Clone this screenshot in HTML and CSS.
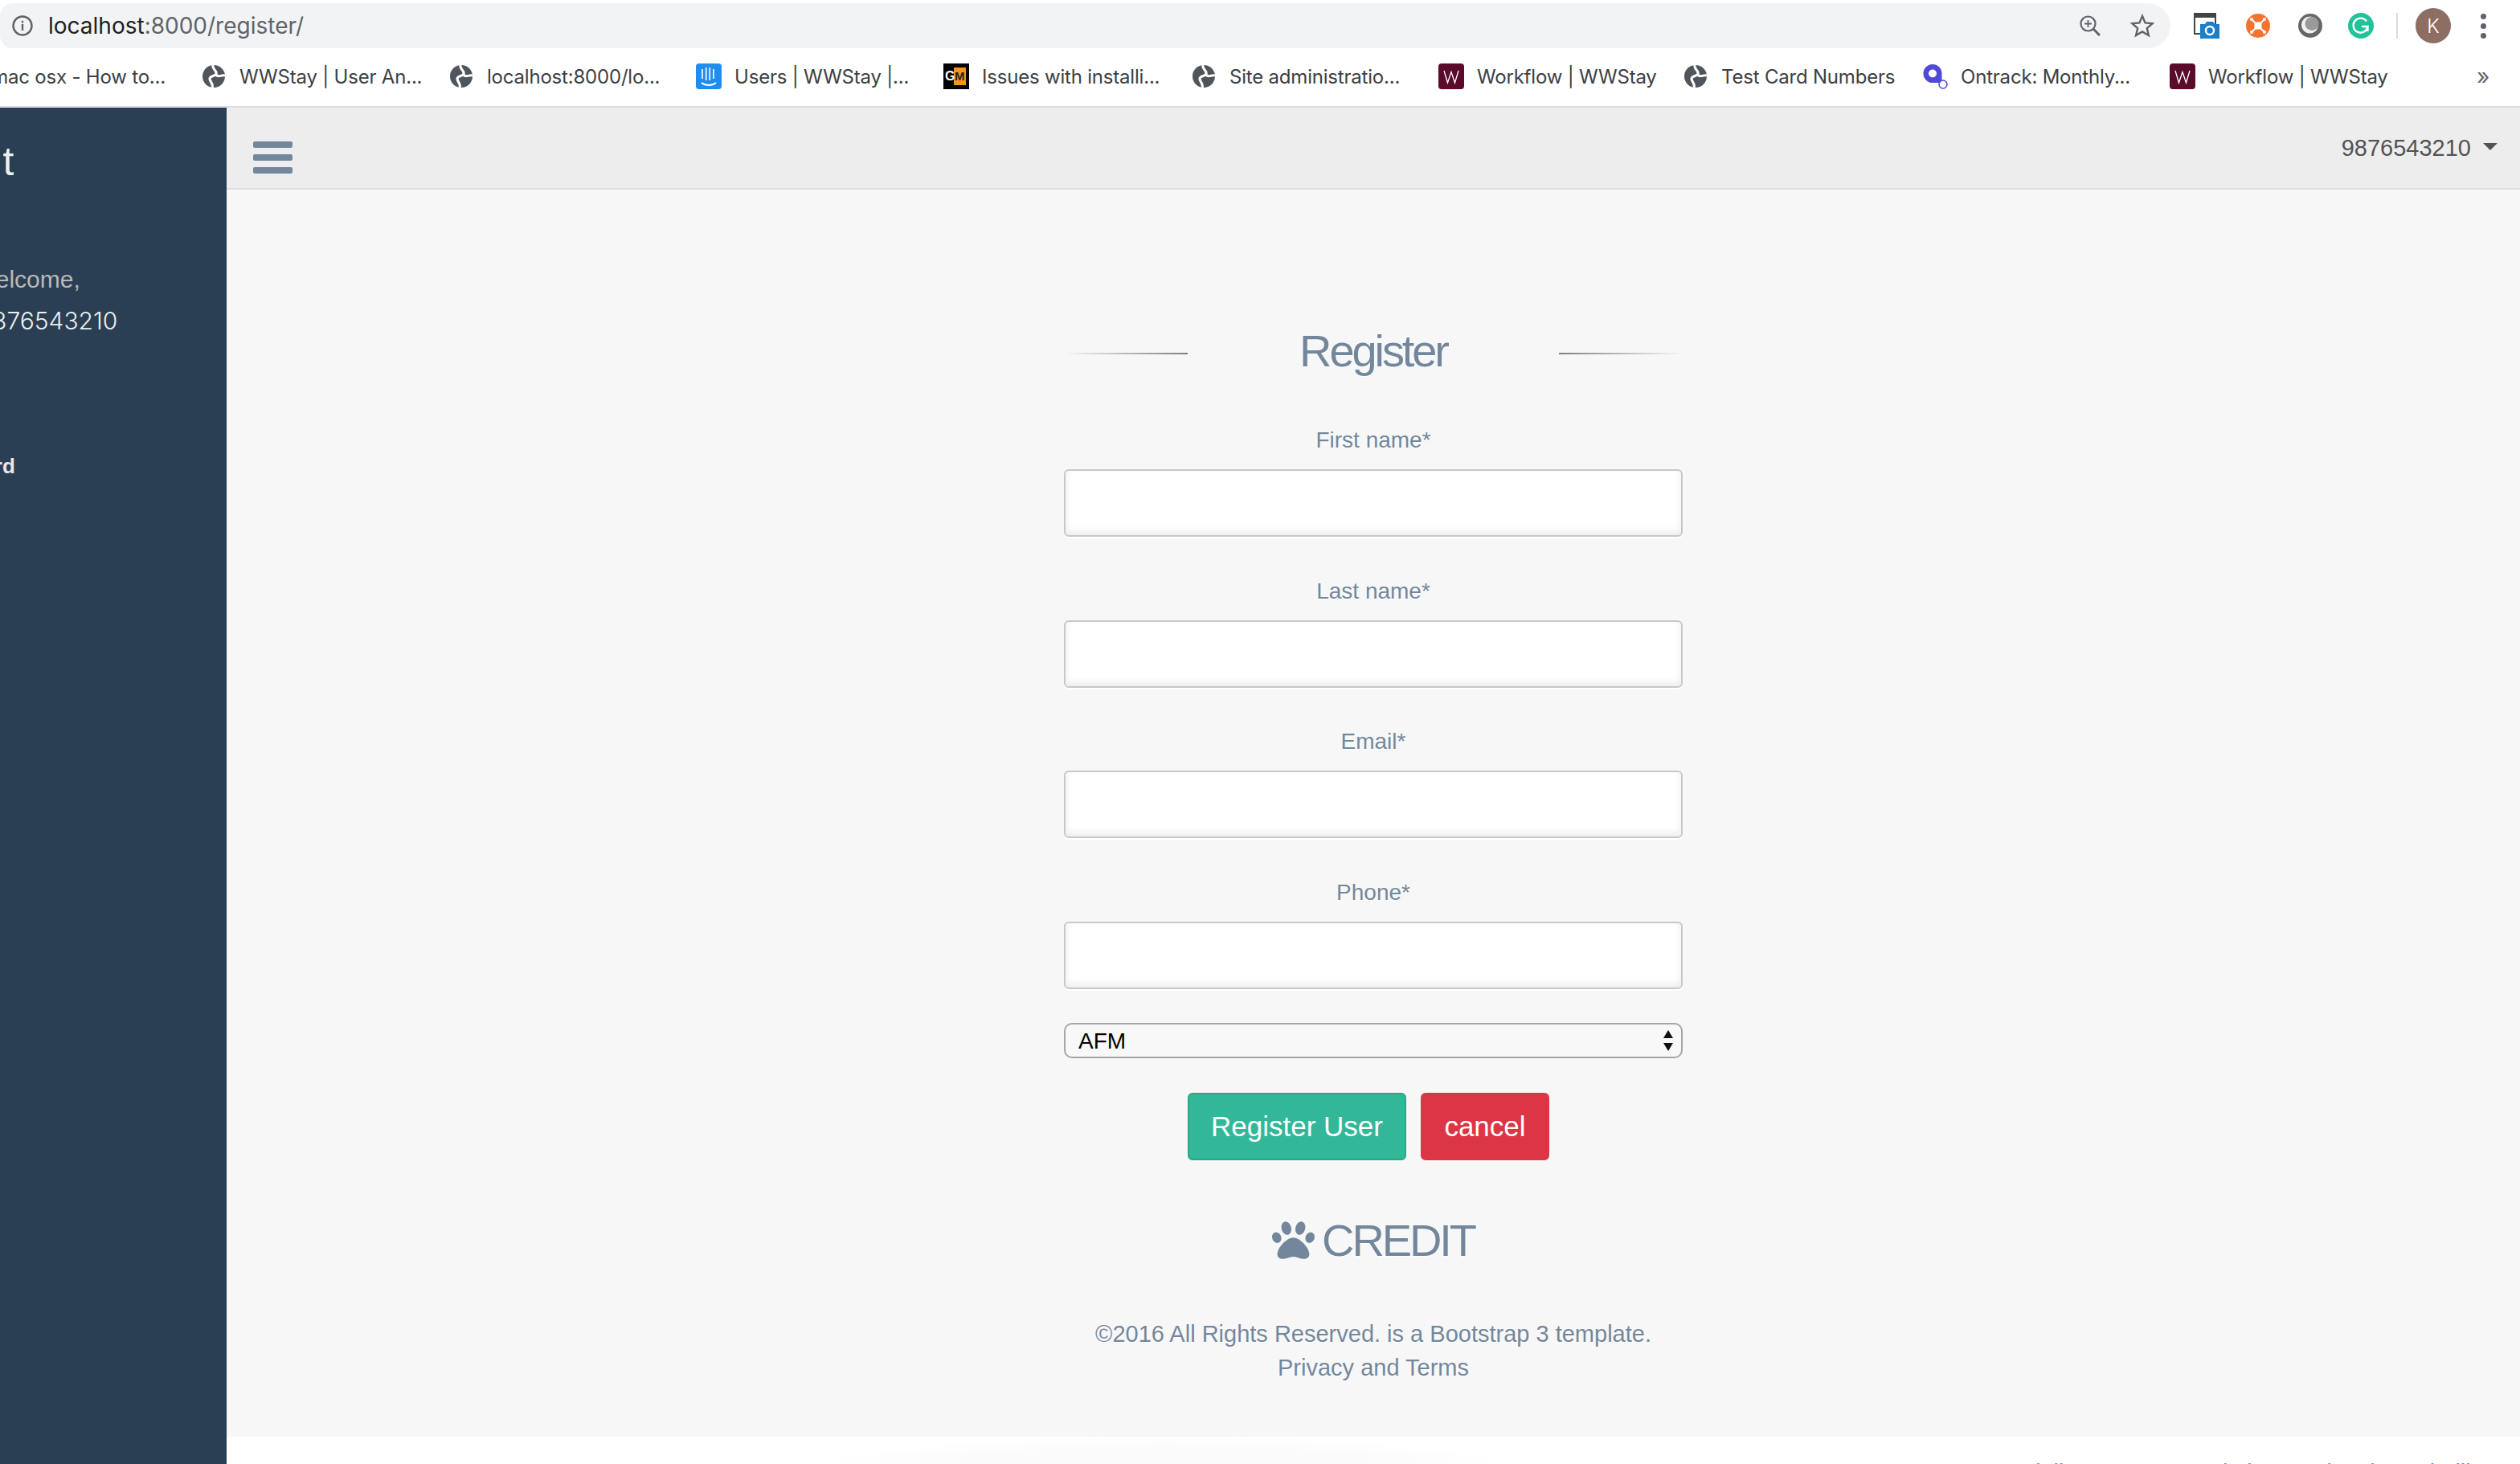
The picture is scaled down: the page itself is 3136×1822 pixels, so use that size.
FILE: index.html
```html
<!DOCTYPE html>
<html lang="en">
<head>
    <meta charset="UTF-8">
    <title>Register</title>
    <link rel="stylesheet" href="styles.css">
</head>
<body>
    <svg class="defs">
        <symbol id="globe" viewBox="0 0 28 28">
            <circle cx="14" cy="14" r="14" fill="#50555b"/>
            <path d="M13 0C12 6 18 6 17 11 16 14 9 13 9 17 9 21 14 23 12 28" fill="none" stroke="#fff" stroke-width="3.200"/>
            <path d="M17 12C19 16 23 12 28 13" fill="none" stroke="#fff" stroke-width="3"/>
        </symbol>
        <symbol id="wf" viewBox="0 0 32 32">
            <rect width="32" height="32" rx="4" fill="#5a0b2b"/>
            <path d="M7 9l4.500 15L16 10.500 20.500 24 25 9" fill="none" stroke="#fff" stroke-width="1.300"/>
        </symbol>
    </svg>

    <div class="toolbar">
        <div class="omnibox">
            <svg class="info" viewBox="0 0 26 26" width="26" height="26"><circle cx="13" cy="13" r="11.500" fill="none" stroke="#5f6368" stroke-width="2.400"/><rect x="11.800" y="11" width="2.400" height="8" fill="#5f6368"/><rect x="11.800" y="6.800" width="2.400" height="2.600" fill="#5f6368"/></svg>
            <span class="url"><span class="host">localhost</span>:8000/register/</span>
            <svg class="zoom-ic" viewBox="0 0 26 26" width="26" height="26"><circle cx="10.500" cy="10.500" r="9" fill="none" stroke="#5f6368" stroke-width="2.200"/><path d="M17 17l8 8" stroke="#5f6368" stroke-width="3"/><path d="M10.500 6v9M6 10.500h9" stroke="#5f6368" stroke-width="1.800"/></svg>
            <svg class="star" viewBox="0 0 30 30" width="30" height="30"><path d="M15 3l3.600 8.400 9.100.800-6.900 6 2.100 8.900L15 22.400l-7.900 4.700 2.100-8.900-6.900-6 9.100-.800z" fill="none" stroke="#5f6368" stroke-width="2.400"/></svg>
        </div>
        <div class="extensions">
            <svg viewBox="0 0 32 32" width="32" height="32"><rect x="1" y="1" width="26" height="25" fill="#fff" stroke="#444" stroke-width="2"/><rect x="1" y="1" width="26" height="5" fill="#444"/><path d="M8 14h6l2-3h8l2 3h6v18H8z" fill="#1a7ec8"/><circle cx="20" cy="22" r="5" fill="none" stroke="#fff" stroke-width="2.400"/></svg>
            <svg viewBox="0 0 30 30" width="30" height="30"><circle cx="15" cy="15" r="15" fill="#f4742f"/><rect x="10.500" y="10.500" width="9" height="9" rx="2" fill="#fff"/><path d="M7 7l16 16M23 7L7 23" stroke="#fff" stroke-width="2"/><circle cx="7" cy="7" r="2" fill="#fff"/><circle cx="23" cy="7" r="2" fill="#fff"/><circle cx="7" cy="23" r="2" fill="#fff"/><circle cx="23" cy="23" r="2" fill="#fff"/></svg>
            <svg viewBox="0 0 30 30" width="30" height="30"><circle cx="15" cy="15" r="15" fill="#666"/><circle cx="14.500" cy="14" r="10.500" fill="#f2f2f2"/><circle cx="17" cy="12.500" r="8.500" fill="#9a9a9a"/></svg>
            <svg viewBox="0 0 32 32" width="32" height="32"><circle cx="16" cy="16" r="16" fill="#23c29a"/><path d="M23 10.500A9 9 0 1 0 24.500 17H17M24.500 17v6" fill="none" stroke="#fff" stroke-width="2.400"/></svg>
            <span class="divider"></span>
            <span class="avatar">K</span>
            <span class="kebab"><i></i><i></i><i></i></span>
        </div>
    </div>

    <div class="bookmarks">
        <div class="bm first"><span>mac osx - How to...</span></div>
        <div class="bm"><svg width="28" height="28"><use href="#globe"/></svg><span>WWStay | User An...</span></div>
        <div class="bm"><svg width="28" height="28"><use href="#globe"/></svg><span>localhost:8000/lo...</span></div>
        <div class="bm"><svg width="32" height="32" viewBox="0 0 32 32"><rect width="32" height="32" rx="4" fill="#1f8ded"/><path d="M8 7v12M12.700 5v16M17.300 5v16M22 7v12" stroke="#fff" stroke-width="1.600"/><path d="M7 24c5 4 13 4 18 0" fill="none" stroke="#fff" stroke-width="1.800"/></svg><span>Users | WWStay |...</span></div>
        <div class="bm"><svg width="32" height="32" viewBox="0 0 32 32"><rect width="32" height="32" fill="#000"/><rect x="13" y="5" width="15" height="22" fill="#f7941d"/><text class="gm" x="2" y="21">G</text><text class="gm dark" x="14" y="21">M</text></svg><span>Issues with installi...</span></div>
        <div class="bm"><svg width="28" height="28"><use href="#globe"/></svg><span>Site administratio...</span></div>
        <div class="bm"><svg width="32" height="32"><use href="#wf"/></svg><span>Workflow | WWStay</span></div>
        <div class="bm"><svg width="28" height="28"><use href="#globe"/></svg><span>Test Card Numbers</span></div>
        <div class="bm"><svg width="32" height="32" viewBox="0 0 32 32"><path d="M13 1a11.500 11.500 0 0 1 11.500 11.500V24H13a11.500 11.500 0 0 1 0-23z" fill="#4f48d8"/><circle cx="13" cy="12.500" r="5" fill="#fff"/><circle cx="26" cy="26" r="5" fill="#fff" stroke="#4f48d8" stroke-width="1.500"/></svg><span>Ontrack: Monthly...</span></div>
        <div class="bm"><svg width="32" height="32"><use href="#wf"/></svg><span>Workflow | WWStay</span></div>
        <div class="bm-more">»</div>
    </div>

    <div class="app">
        <div class="sidebar">
            <div class="side-title">Credit</div>
            <div class="side-welcome">Welcome,</div>
            <div class="side-user">9876543210</div>
            <div class="side-link">Dashboard</div>
        </div>

        <div class="main">
            <div class="topnav">
                <div class="hamburger"><i></i><i></i><i></i></div>
                <div class="user-menu">9876543210<span class="caret"></span></div>
            </div>

            <div class="content">
                <form class="register">
                    <h1 class="reg-title"><span>Register</span></h1>

                    <label class="field-label" for="first">First name*</label>
                    <input class="field" type="text" id="first">

                    <label class="field-label" for="last">Last name*</label>
                    <input class="field" type="text" id="last">

                    <label class="field-label" for="email">Email*</label>
                    <input class="field" type="text" id="email">

                    <label class="field-label" for="phone">Phone*</label>
                    <input class="field" type="text" id="phone">

                    <div class="select-wrap">
                        <select class="currency">
                            <option>AFM</option>
                        </select>
                        <svg class="select-arrows" viewBox="0 0 12 26" width="12" height="26"><path d="M6 0l6 10H0zM6 26L0 16h12z" fill="#111"/></svg>
                    </div>

                    <div class="buttons">
                        <button type="button" class="btn btn-success">Register User</button>
                        <button type="button" class="btn btn-danger">cancel</button>
                    </div>

                    <div class="brand">
                        <svg viewBox="0 0 512 512" width="53" height="53"><path fill="#73879c" d="M256 224c-79.410 0-192 122.760-192 200.250 0 34.900 26.810 55.750 71.740 55.750 48.840 0 81.090-25.080 120.260-25.080 39.510 0 71.850 25.080 120.260 25.080 44.930 0 71.740-20.850 71.740-55.750C448 346.760 335.410 224 256 224zm-147.280-12.610c-10.400-34.650-42.440-57.090-71.560-50.130-29.120 6.960-44.290 40.690-33.890 75.340 10.400 34.650 42.440 57.090 71.560 50.130 29.120-6.960 44.290-40.690 33.890-75.340zm84.720-20.780c30.940-8.140 46.420-49.940 34.580-93.360s-46.520-72.010-77.460-63.870-46.420 49.940-34.580 93.360c11.840 43.420 46.520 72.010 77.460 63.870zm281.390-29.340c-29.120-6.960-61.150 15.480-71.560 50.130-10.400 34.650 4.770 68.380 33.890 75.340 29.120 6.960 61.150-15.480 71.560-50.130 10.400-34.650-4.770-68.380-33.890-75.340zm-156.270 29.340c30.940 8.140 65.620-20.450 77.460-63.870 11.840-43.420-3.640-85.210-34.580-93.360s-65.620 20.450-77.460 63.870c-11.840 43.420 3.640 85.220 34.580 93.360z"/></svg>
                        <span>CREDIT</span>
                    </div>

                    <p class="copy">©2016 All Rights Reserved. is a Bootstrap 3 template.<br>Privacy and Terms</p>
                </form>

                <div class="footer">Gentelella - Bootstrap Admin Template by Colorlib</div>
            </div>
        </div>
    </div>
</body>
</html>
```

FILE: styles.css
```css
html, body {
    height: 100%;
    margin: 0;
    overflow: hidden;
}

body {
    display: flex;
    flex-direction: column;
    background-color: #fff;
    font-family: "Liberation Sans", Arial, sans-serif;
    color: #73879c;
}

.defs {
    display: none;
}

/* browser chrome */
.toolbar {
    display: flex;
    align-items: flex-start;
    height: 60px;
    flex: none;
}

.omnibox {
    display: flex;
    align-items: center;
    width: 2701px;
    height: 56px;
    margin-top: 4px;
    padding-left: 15px;
    box-sizing: border-box;
    background-color: #f1f3f4;
    border-radius: 16px 28px 28px 16px;
}

.url {
    margin-left: 19px;
    font-family: Inter, sans-serif;
    font-size: 28px;
    color: #5f6368;
    flex: 1;
}

.host {
    color: #202124;
}

.zoom-ic {
    margin-right: 37px;
}

.star {
    margin-right: 20px;
}

.extensions {
    display: flex;
    align-items: center;
    flex: 1;
    height: 64px;
    padding-left: 29px;
}

.extensions svg:nth-child(1) {
    margin-right: 33px;
}

.extensions svg:nth-child(2) {
    margin-right: 35px;
}

.extensions svg:nth-child(3) {
    margin-right: 32px;
}

.divider {
    width: 2px;
    height: 32px;
    margin-left: 28px;
    margin-right: 22px;
    background-color: #dadce0;
}

.avatar {
    display: flex;
    align-items: center;
    justify-content: center;
    width: 44px;
    height: 44px;
    border-radius: 50%;
    background-color: #8d6e63;
    color: #fff;
    font-family: Inter, sans-serif;
    font-size: 24px;
    font-weight: 300;
}

.kebab {
    display: flex;
    flex-direction: column;
    gap: 5px;
    margin-left: 37px;
}

.kebab i {
    display: block;
    width: 7px;
    height: 7px;
    border-radius: 50%;
    background-color: #5f6368;
}

.bookmarks {
    display: grid;
    grid-template-columns: 252px 308px 306px 308px 310px 306px 306px 296px 308px 382px 1fr;
    align-items: center;
    height: 70px;
    padding-bottom: 2px;
    flex: none;
    border-bottom: 2px solid #dcdde1;
    font-family: Inter, sans-serif;
    font-size: 24px;
    letter-spacing: -0.2px;
    color: #3c4043;
    overflow: hidden;
}

.bm {
    display: flex;
    align-items: center;
    gap: 18px;
    white-space: nowrap;
}

.bm svg[width="32"] {
    margin-right: -2px;
}

.bm.first {
    justify-content: flex-end;
    padding-right: 46px;
}

.gm {
    font-family: "Liberation Sans", sans-serif;
    font-size: 16px;
    font-weight: bold;
    fill: #fff;
}

.gm.dark {
    fill: #222;
    font-size: 15px;
}

.bm-more {
    font-size: 28px;
    color: #5f6368;
}

/* app */
.app {
    display: flex;
    flex: 1;
    min-height: 0;
}

.sidebar {
    width: 282px;
    flex: none;
    background-color: #2a3f54;
    overflow: hidden;
    white-space: nowrap;
}

.side-title {
    margin-top: 42px;
    margin-left: -116px;
    font-size: 50px;
    line-height: 50px;
    color: #ecf0f1;
}

.side-welcome {
    margin-top: 102px;
    margin-left: -33px;
    font-size: 30px;
    line-height: 40px;
    color: #bab8b8;
}

.side-user {
    margin-top: 11px;
    margin-left: -28px;
    font-family: Inter, sans-serif;
    font-weight: 300;
    font-size: 30px;
    line-height: 40px;
    color: #ecf0f1;
}

.side-link {
    margin-top: 141px;
    margin-left: -117px;
    font-size: 26px;
    font-weight: bold;
    line-height: 40px;
    color: #e7e7e7;
}

.main {
    display: flex;
    flex-direction: column;
    flex: 1;
    min-width: 0;
}

.topnav {
    display: flex;
    align-items: center;
    justify-content: space-between;
    height: 100px;
    flex: none;
    padding-left: 33px;
    padding-right: 28px;
    background-color: #ededed;
    border-bottom: 2px solid #d9dee4;
}

.hamburger {
    display: flex;
    flex-direction: column;
    gap: 8px;
    margin-top: 23px;
}

.hamburger i {
    display: block;
    width: 49px;
    height: 8px;
    border-radius: 2px;
    background-color: #73879c;
}

.user-menu {
    display: flex;
    align-items: center;
    font-size: 29px;
    color: #515356;
}

.caret {
    margin-left: 15px;
    margin-top: -4px;
    border-top: 9px solid #515356;
    border-left: 9px solid transparent;
    border-right: 9px solid transparent;
}

.content {
    display: flex;
    flex-direction: column;
    flex: 1;
    min-height: 0;
    background-color: #f7f7f7;
}

/* form */
.register {
    width: 770px;
    height: 1552px;
    flex: none;
    margin-left: 1042px;
    padding-top: 170px;
    box-sizing: border-box;
    text-align: center;
    text-shadow: 0 1px 0 #fff;
}

.reg-title {
    display: flex;
    align-items: center;
    justify-content: space-between;
    height: 60px;
    margin: 0 0 62px;
    font-size: 56px;
    font-weight: normal;
    letter-spacing: -0.055em;
}

.reg-title::before,
.reg-title::after {
    content: "";
    width: 154px;
    height: 2px;
    margin-top: 8px;
}

.reg-title::before {
    background: linear-gradient(to right, #f7f7f7, #7e7e7e);
}

.reg-title::after {
    background: linear-gradient(to left, #f7f7f7, #7e7e7e);
}

.field-label {
    display: block;
    height: 40px;
    margin-bottom: 16px;
    font-size: 28px;
    line-height: 40px;
}

.field {
    display: block;
    width: 100%;
    height: 84px;
    margin: 0 0 47.500px;
    box-sizing: border-box;
    background-color: #fff;
    border: 2px solid #c8c8c8;
    border-radius: 6px;
    box-shadow: 0 2px 0 #fff, 0 -4px 10px rgba(0, 0, 0, 0.08) inset;
    outline: none;
}

.select-wrap {
    position: relative;
    margin-top: -5px;
}

.currency {
    display: block;
    width: 100%;
    height: 44px;
    padding: 0 16px;
    box-sizing: border-box;
    appearance: none;
    background-color: #f8f8f8;
    border: 2px solid #a6a6a6;
    border-radius: 10px;
    font-family: "Liberation Sans", sans-serif;
    font-size: 28px;
    color: #000;
}

.select-arrows {
    position: absolute;
    top: 9px;
    right: 12px;
}

.buttons {
    display: flex;
    gap: 18px;
    margin-top: 43px;
    margin-left: 154px;
}

.btn {
    height: 84px;
    padding: 0;
    box-sizing: border-box;
    border-radius: 6px;
    font-family: "Liberation Sans", sans-serif;
    font-size: 35px;
    color: #fff;
    white-space: nowrap;
    cursor: pointer;
}

.btn-success {
    width: 272px;
    background-color: #32b898;
    border: 2px solid #26a88a;
}

.btn-danger {
    width: 160px;
    background-color: #dc3545;
    border: 2px solid #dc3545;
}

.brand {
    display: flex;
    align-items: center;
    justify-content: center;
    gap: 9px;
    margin-top: 71px;
    height: 56px;
    font-size: 56px;
    letter-spacing: -0.055em;
}

.copy {
    margin: 68px 0 0;
    font-size: 29px;
    line-height: 42px;
}

.footer {
    flex: 1;
    padding-top: 28px;
    padding-right: 52px;
    background: radial-gradient(ellipse 430px 34px at 1168px 100%, #fbfbfb 60%, #fff 100%), #fff;
    text-align: right;
    font-size: 28.500px;
    line-height: 30px;
    white-space: nowrap;
    overflow: hidden;
}
```
